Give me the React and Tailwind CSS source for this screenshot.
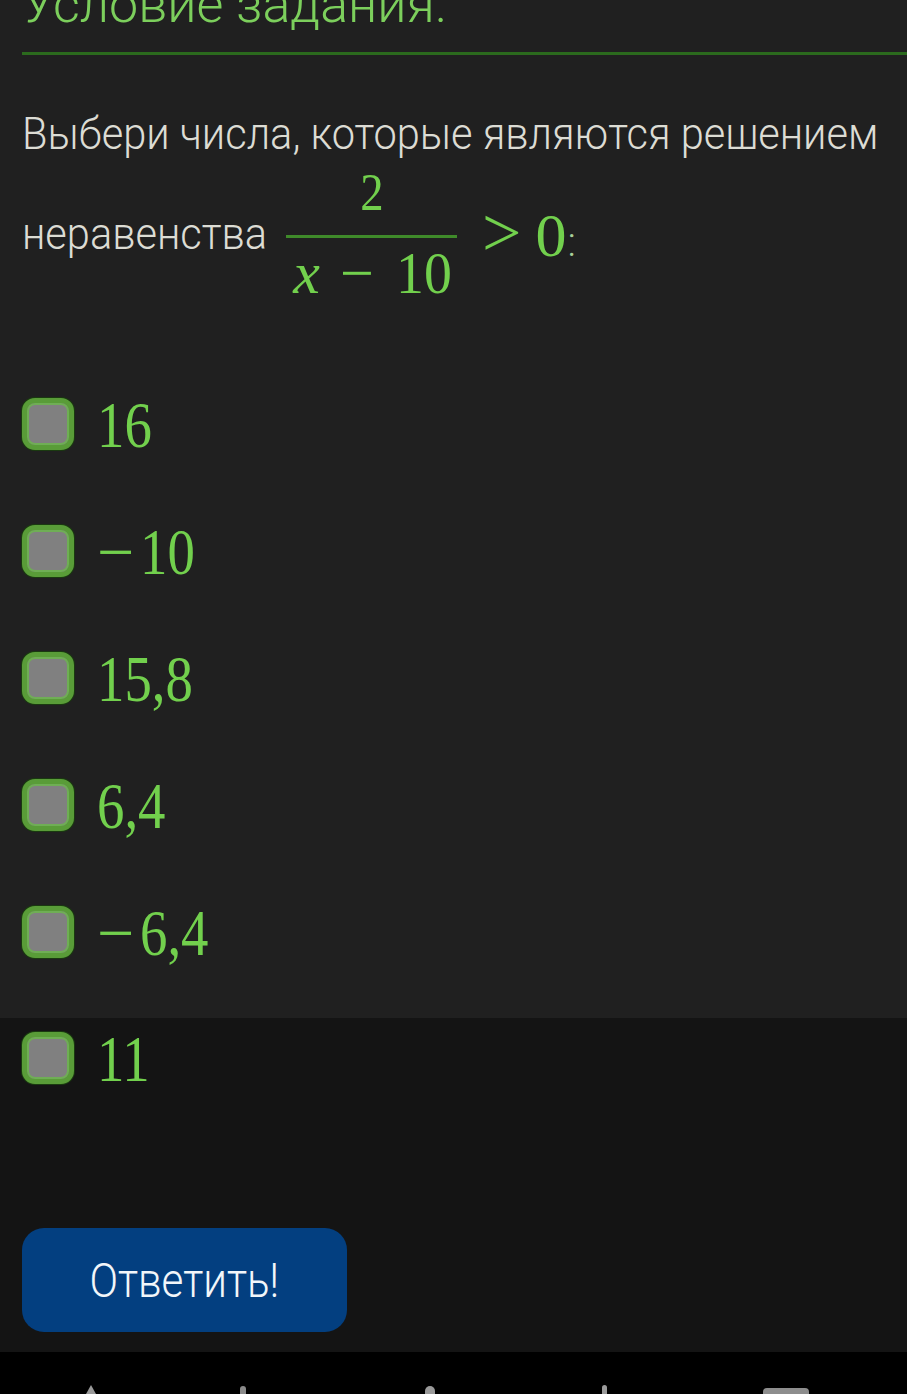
import React from "react";

const options = [
  { neg: false, num: "16" },
  { neg: true, num: "10" },
  { neg: false, num: "15,8" },
  { neg: false, num: "6,4" },
  { neg: true, num: "6,4" },
];

function Box() {
  return (
    <div className="w-[52px] h-[52px] shrink-0 rounded-[13px] border-[5px] border-[#599c38] bg-[#808080] shadow-[inset_0_0_0_2px_#6fae55,0_0_0_1px_#1a3a10]" />
  );
}

function OptionRow({ neg, num }) {
  return (
    <div className="flex items-center h-[52px]">
      <Box />
      <span className="ml-[23px] flex items-baseline whitespace-nowrap text-[66px] leading-none text-[#72d04d] font-['Liberation_Serif',serif] translate-y-[1px]">
        {neg && <span className="inline-block w-[43px]">{"\u2212"}</span>}
        <span className="inline-block origin-left scale-x-[0.83]">{num}</span>
      </span>
    </div>
  );
}

export default function App() {
  return (
    <div className="w-[907px] h-[1394px] overflow-hidden flex flex-col bg-black font-['Roboto',sans-serif]">
      <div className="bg-[#202020] pl-[22px] h-[1018px] shrink-0">
        <div className="-mt-[21px] text-[52px] leading-none font-light text-[#7ccf5c] whitespace-nowrap">
          Условие задания.
        </div>
        <div className="mt-[21px] h-[3px] bg-[#2b6a1d]" />
        <div className="mt-[57px] text-[44px] leading-none font-light text-[#dcdcd4] whitespace-nowrap">
          <span className="inline-block origin-left scale-x-[0.945]">Выбери числа, которые являются решением</span>
        </div>
        <div className="mt-[15px] flex items-center h-[130px]">
          <span className="inline-block w-[264px] text-[44px] leading-none font-light text-[#dcdcd4] translate-y-[-2px] whitespace-nowrap">
            <span className="inline-block origin-left scale-x-[0.945]">неравенства</span>
          </span>
          <div className="w-[171px] flex flex-col items-center">
            <span className="inline-block scale-x-[0.9] text-[52px] leading-none text-[#72d04d] font-['Liberation_Serif',serif] translate-y-[-3px]">2</span>
            <div className="mt-[13px] h-[3px] w-full bg-[#3f8a2a]" />
            <span className="mt-[5px] flex items-baseline text-[60px] leading-none text-[#72d04d] font-['Liberation_Serif',serif] whitespace-nowrap translate-x-[2px]">
              <i className="inline-block">x</i>
              <span className="ml-[20px] inline-block">{"\u2212"}</span>
              <span className="ml-[20px] inline-block scale-x-[0.93]">10</span>
            </span>
          </div>
          <span className="ml-[25px] inline-flex items-baseline translate-y-[-3px] text-[62px] leading-none text-[#72d04d] font-['Liberation_Serif',serif] whitespace-nowrap">
            <span className="text-[70px]">&gt;</span>
            <span className="ml-[14px] inline-block">0</span>
            <span className="ml-[1px] font-['Roboto',sans-serif] font-light text-[40px] text-[#a8cf98]">:</span>
          </span>
        </div>
        <div className="mt-[97px] flex flex-col gap-[75px]">
          {options.map((o, i) => (
            <OptionRow key={i} neg={o.neg} num={o.num} />
          ))}
        </div>
      </div>
      <div className="bg-[#141414] pl-[22px] h-[334px] shrink-0">
        <div className="pt-[14px]">
          <OptionRow neg={false} num="11" />
        </div>
        <button className="mt-[144px] w-[325px] h-[104px] rounded-[22px] bg-[#033f80] flex items-center justify-center">
          <span className="text-[49px] font-light leading-none text-[#f2f6fa] inline-block scale-x-[0.86]">Ответить!</span>
        </button>
      </div>
      <div className="flex-1 bg-black relative">
        <div className="absolute left-[86px] top-[33px] w-0 h-0 border-l-[5px] border-r-[5px] border-b-[9px] border-l-transparent border-r-transparent border-b-[#9a9a9a]" />
        <div className="absolute left-[240px] top-[34px] w-[6px] h-[8px] rounded-t-[3px] bg-[#8a8a8a]" />
        <div className="absolute left-[425px] top-[34px] w-[10px] h-[8px] rounded-t-full bg-[#9a9a9a]" />
        <div className="absolute left-[602px] top-[33px] w-[5px] h-[9px] rounded-t-[3px] bg-[#9a9a9a]" />
        <div className="absolute left-[763px] top-[36px] w-[46px] h-[8px] rounded-t-[4px] bg-[#8d8d8d]" />
      </div>
    </div>
  );
}
